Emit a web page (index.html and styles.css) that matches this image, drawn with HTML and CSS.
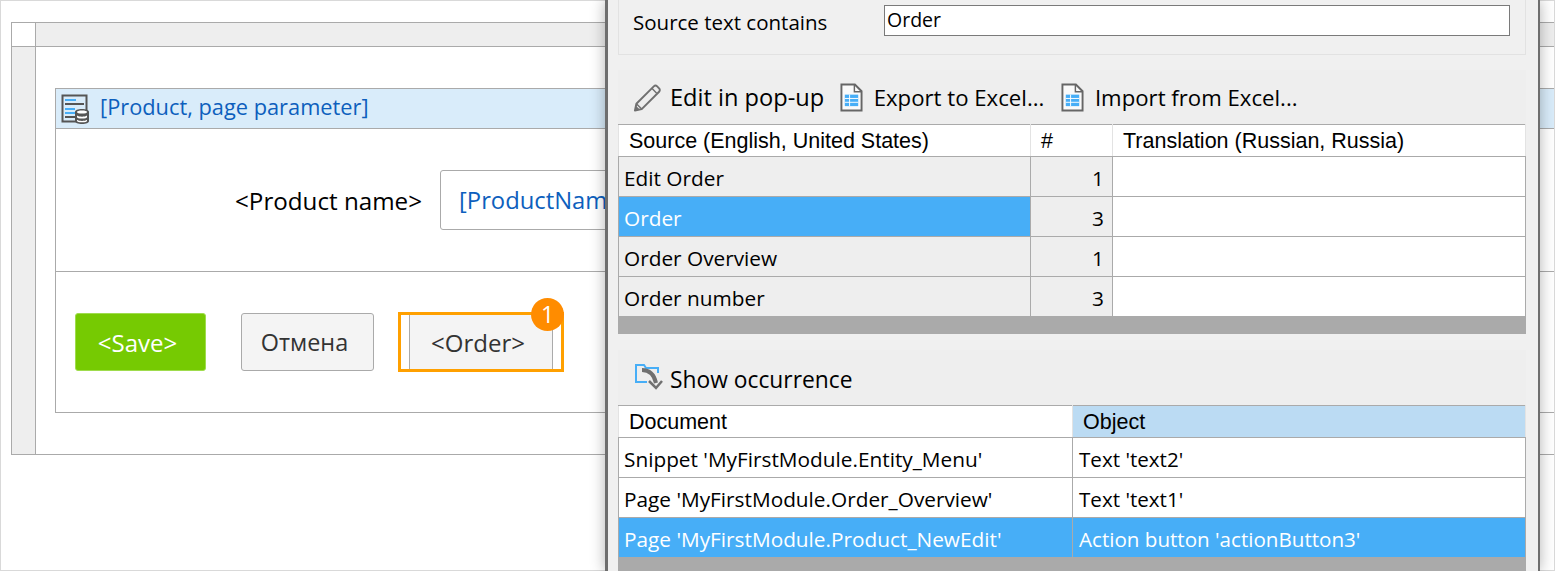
FILE: index.html
```html
<!DOCTYPE html>
<html lang="en">
  <head>
    <meta charset="UTF-8" />
    <meta name="viewport" content="width=device-width, initial-scale=1.0" />
    <title>Translations</title>
    <link rel="stylesheet" href="styles.css">
  </head>
  <body>
    <!-- Page editor behind the dialog -->
    <div class="page">
      <div class="frame">
        <div class="frame-corner"></div>
        <div class="frame-top"></div>
        <div class="frame-side"></div>
        <div class="frame-main">
          <div class="panel">
            <div class="panel-title">
              <svg class="icon-form" width="30" height="30" viewBox="0 0 30 30">
                <rect x="1.500" y="1.500" width="24" height="26" fill="none" stroke="#555" stroke-width="2"/>
                <rect x="4" y="5" width="11" height="2" fill="#47aef7"/>
                <rect x="4" y="9" width="19" height="2" fill="#555"/>
                <rect x="4" y="14" width="10" height="2" fill="#47aef7"/>
                <rect x="4" y="18" width="10" height="2" fill="#47aef7"/>
                <rect x="4" y="22" width="10" height="2" fill="#555"/>
                <path d="M14 18c0-2 3-3 7-3s7 1 7 3v9c0 2-3 3-7 3s-7-1-7-3z" fill="#555"/>
                <path d="M16 18c0-1 2-1.500 5-1.500s5 .5 5 1.500-2 1.500-5 1.500-5-.5-5-1.500zM16 21.500c1 .8 3 1.200 5 1.200s4-.4 5-1.200v1.500c0 1-2 1.500-5 1.500s-5-.5-5-1.500zM16 25.700c1 .8 3 1.200 5 1.200s4-.4 5-1.200v1c0 1-2 1.500-5 1.500s-5-.5-5-1.500z" fill="#fff"/>
              </svg>
              <span class="panel-name">[Product, page parameter]</span>
            </div>
            <div class="panel-form">
              <label class="field-label">&lt;Product name&gt;</label>
              <div class="field-input">[ProductName]</div>
            </div>
            <div class="panel-actions">
              <div class="btn btn-save">&lt;Save&gt;</div>
              <div class="btn btn-cancel">Отмена</div>
              <div class="order-mark">
                <div class="btn btn-order">&lt;Order&gt;</div>
                <span class="badge">1</span>
              </div>
            </div>
          </div>
        </div>
      </div>
    </div>

    <!-- Translation dialog -->
    <div class="dialog">
      <div class="filter">
        <span class="filter-label">Source text contains</span>
        <div class="filter-input">Order</div>
      </div>

      <div class="toolbar">
        <span class="tool tool-edit">
          <svg width="29" height="29" viewBox="0 0 30 30">
            <path d="M2 28.500l1.500-7L21.500 3.500c1-1 2.500-1 3.500 0l2 2c1 1 1 2.500 0 3.500L9 27z" fill="none" stroke="#707070" stroke-width="2" stroke-linejoin="round"/>
            <path d="M3.500 21.500L9 27M19.500 5.500l5 5" fill="none" stroke="#707070" stroke-width="1.500"/>
            <path d="M2 28.500l1-5 4 4z" fill="#707070"/>
          </svg>
          Edit in pop-up
        </span>
        <span class="tool">
          <svg width="23" height="29" viewBox="0 0 24 30">
            <path d="M1.500 1.500h14l7 7v20h-21z" fill="#fafafa" stroke="#666" stroke-width="2"/>
            <path d="M15 2v7h7" fill="none" stroke="#666" stroke-width="1.500"/>
            <path d="M5 12h14v12H5z" fill="#47aef7"/>
            <path d="M5 16h14M5 20h14M10 12v12" stroke="#fff" stroke-width="1"/>
          </svg>
          Export to Excel...
        </span>
        <span class="tool">
          <svg width="23" height="29" viewBox="0 0 24 30">
            <path d="M1.500 1.500h14l7 7v20h-21z" fill="#fafafa" stroke="#666" stroke-width="2"/>
            <path d="M15 2v7h7" fill="none" stroke="#666" stroke-width="1.500"/>
            <path d="M5 12h14v12H5z" fill="#47aef7"/>
            <path d="M5 16h14M5 20h14M10 12v12" stroke="#fff" stroke-width="1"/>
          </svg>
          Import from Excel...
        </span>
      </div>

      <table class="grid grid-source">
        <colgroup>
          <col class="col-source" />
          <col class="col-count" />
          <col />
        </colgroup>
        <thead>
          <tr>
            <th>Source (English, United States)</th>
            <th>#</th>
            <th>Translation (Russian, Russia)</th>
          </tr>
        </thead>
        <tbody>
          <tr><td class="shade">Edit Order</td><td class="shade num">1</td><td></td></tr>
          <tr><td class="selected">Order</td><td class="shade num">3</td><td></td></tr>
          <tr><td class="shade">Order Overview</td><td class="shade num">1</td><td></td></tr>
          <tr><td class="shade">Order number</td><td class="shade num">3</td><td></td></tr>
        </tbody>
      </table>
      <div class="grid-foot foot-source"></div>

      <div class="toolbar toolbar-second">
        <span class="tool tool-show">
          <svg width="29" height="28" viewBox="0 0 29 28">
            <path d="M13 19H2V2h8l2 3h12v5" fill="none" stroke="#47aef7" stroke-width="2"/>
            <path d="M8 7c7 0 12 4 14 13" fill="none" stroke="#707070" stroke-width="4"/>
            <path d="M15 18l7 7 6-7" fill="none" stroke="#707070" stroke-width="2.500"/>
          </svg>
          Show occurrence
        </span>
      </div>

      <table class="grid grid-usage">
        <colgroup>
          <col class="col-document" />
          <col />
        </colgroup>
        <thead>
          <tr>
            <th>Document</th>
            <th class="sorted">Object</th>
          </tr>
        </thead>
        <tbody>
          <tr><td>Snippet 'MyFirstModule.Entity_Menu'</td><td class="usage-object">Text 'text2'</td></tr>
          <tr><td>Page 'MyFirstModule.Order_Overview'</td><td class="usage-object">Text 'text1'</td></tr>
          <tr><td class="selected">Page 'MyFirstModule.Product_NewEdit'</td><td class="selected usage-object">Action button 'actionButton3'</td></tr>
        </tbody>
      </table>
      <div class="grid-foot foot-usage"></div>
    </div>
  </body>
</html>
```

FILE: styles.css
```css
/* General Styling */
html,
body {
  margin: 0;
  padding: 0;
  height: 571px;
  overflow: hidden;
}

body {
  position: relative;
  font-family: "Open Sans", sans-serif;
  background: #ffffff;
  color: #000;
}

/* Page Editor */
.page {
  box-sizing: border-box;
  height: 571px;
  padding: 21px 0 0 10px;
  border: 1px solid #d9d9d9;
  overflow: hidden;
}

.frame {
  display: grid;
  grid-template-columns: 24px 1fr;
  grid-template-rows: 24px auto;
  border: 1px solid #aaa;
  border-right: none;
}

.frame-corner {
  border-right: 1px solid #aaa;
  border-bottom: 1px solid #aaa;
}

.frame-top {
  background: #eeeeee;
  border-bottom: 1px solid #aaa;
}

.frame-side {
  background: #eeeeee;
  border-right: 1px solid #aaa;
}

.frame-main {
  padding: 41px 0 41px 19px;
}

.panel {
  border: 1px solid #aaa;
  border-right: none;
}

.panel-title {
  display: flex;
  align-items: center;
  height: 39px;
  padding-left: 5px;
  background: #d9ecfa;
  border-bottom: 1px solid #aaa;
  color: #0d5fbd;
  font-size: 21.800px;
}

.panel-name {
  padding-bottom: 4px;
}

.icon-form {
  margin-right: 9px;
}

.panel-form {
  display: flex;
  align-items: center;
  height: 142px;
  padding-left: 179px;
  border-bottom: 1px solid #aaa;
}

.field-label {
  font-size: 24.200px;
  margin-right: 18px;
}

.field-input {
  box-sizing: border-box;
  width: 400px;
  height: 60px;
  line-height: 58px;
  padding-left: 18px;
  border: 1px solid #aaa;
  border-radius: 3px;
  color: #0d5fbd;
  font-size: 23.800px;
  white-space: nowrap;
}

.panel-actions {
  display: flex;
  align-items: center;
  height: 140px;
  padding-left: 19px;
}

.btn {
  box-sizing: border-box;
  height: 58px;
  line-height: 57px;
  padding-right: 6px;
  text-align: center;
  font-size: 24px;
  border: 1px solid #aaa;
  border-radius: 3px;
  background: #f4f4f4;
  color: #333;
}

.btn-save {
  width: 131px;
  margin-right: 35px;
  background: #76ca02;
  border-color: #9fdc4d;
  color: #fff;
}

.btn-cancel {
  width: 133px;
  margin-right: 24px;
  font-size: 23.400px;
}

/* Highlight Around The Order Button */
.order-mark {
  position: relative;
  box-sizing: border-box;
  width: 166px;
  height: 60px;
  padding: 0 8px;
  border: 3px solid #ffa000;
}

.btn-order {
  width: 144px;
  height: 54px;
  line-height: 56px;
  border-width: 0 1px;
  border-radius: 0;
}

.badge {
  position: absolute;
  top: -17px;
  right: -3px;
  width: 33px;
  height: 33px;
  line-height: 33px;
  border-radius: 50%;
  background: #ff8c00;
  color: #fff;
  text-align: center;
  font-size: 23px;
}

/* Dialog */
.dialog {
  position: absolute;
  top: 0;
  left: 605px;
  box-sizing: border-box;
  width: 935px;
  height: 571px;
  padding: 0 12px 0 10px;
  background: #f0f0f0;
  border-left: 3px solid #6e6e6e;
  border-right: 2px solid #6e6e6e;
  box-shadow: 0 0 14px rgba(0, 0, 0, 0.3);
  overflow: hidden;
}

.filter {
  display: flex;
  box-sizing: border-box;
  height: 55px;
  padding: 5px 15px 0 14px;
  border: 1px solid #e2e2e2;
  border-top: none;
}

.filter-label {
  width: 251px;
  padding-top: 3px;
  font-size: 20.500px;
}

.filter-input {
  flex: 1;
  box-sizing: border-box;
  height: 31px;
  line-height: 28px;
  padding-left: 2px;
  background: #fff;
  border: 1px solid #7a7a7a;
  font-size: 19.500px;
}

.toolbar {
  display: flex;
  align-items: center;
  box-sizing: border-box;
  height: 54px;
  margin-top: 15px;
  padding-left: 15px;
  background: #eeeeee;
  font-size: 22.200px;
}

.toolbar-second {
  height: 55px;
  margin-top: 16px;
  padding: 3px 0 0 16px;
}

.tool {
  display: inline-flex;
  align-items: center;
  gap: 10.500px;
  margin-right: 17px;
  white-space: nowrap;
}

.tool-edit {
  gap: 8px;
  margin-right: 16px;
  font-size: 23.600px;
}

.tool-show {
  gap: 7px;
  font-size: 22.800px;
}

.tool-show svg {
  margin-top: -4px;
}

/* Tables */
.grid {
  width: 100%;
  table-layout: fixed;
  border-collapse: collapse;
  background: #fff;
  font-size: 20.800px;
}

.col-source {
  width: 412px;
}

.col-count {
  width: 82px;
}

.col-document {
  width: 454px;
}

.grid th {
  height: 30px;
  padding: 1px 0 0 10px;
  text-align: left;
  font-family: "Liberation Sans", Arial, sans-serif;
  font-size: 21.500px;
  font-weight: 400;
  border: 1px solid #e3e3e3;
  border-top: 1px solid #aaa;
  border-bottom: 1px solid #aaa;
}

.grid td {
  height: 37px;
  padding: 2px 6px 0 5px;
  border: 1px solid #aaa;
  white-space: nowrap;
}

.grid .usage-object {
  padding-left: 6px;
  font-size: 20.600px;
}

.grid .shade {
  background: #eeeeee;
}

.grid .num {
  text-align: right;
  padding-right: 8px;
}

.grid .selected {
  background: #47aef7;
  color: #fff;
}

.grid .sorted {
  background: #bbdbf3;
}

.grid-foot {
  background: #aaaaaa;
}

.foot-source {
  height: 17px;
}

.foot-usage {
  height: 14px;
}
```
